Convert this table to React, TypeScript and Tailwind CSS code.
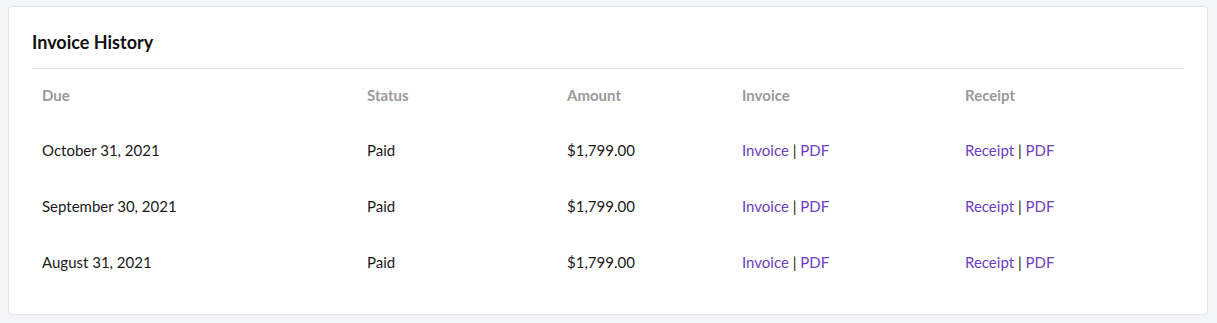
export default function App() {
  const rows = ["October 31, 2021", "September 30, 2021", "August 31, 2021"];
  const grid = "grid grid-cols-[325px_200px_175px_223px_1fr]";
  return (
    <div className="min-h-[323px] bg-[#f4f5f9] pt-[6px] pl-[8px] pr-[9px] pb-[8px] font-['Lato',sans-serif]">
      <div className="bg-white border border-[#e4e5ea] rounded-[4px] h-[309px] px-[23px]">
        <h2 className="pt-[24px] h-[61px] text-[18px] font-bold text-[#111] leading-[22px]">Invoice History</h2>
        <div className="border-t border-[#e4e5ea]">
          <div className={`${grid} h-[53px] items-center text-[15px] font-bold text-[#9a9a9a]`}>
            <div className="pl-[10px]">Due</div>
            <div className="pl-[10px]">Status</div>
            <div className="pl-[10px]">Amount</div>
            <div className="pl-[10px]">Invoice</div>
            <div className="pl-[10px]">Receipt</div>
          </div>
          {rows.map((d) => (
            <div key={d} className={`${grid} h-[56px] items-center text-[15px] text-[#1a1a1a]`}>
              <div className="pl-[10px]">{d}</div>
              <div className="pl-[10px]">Paid</div>
              <div className="pl-[10px]">$1,799.00</div>
              <div className="pl-[10px]">
                <span className="text-[#6a3dc2]">Invoice</span> | <span className="text-[#6a3dc2]">PDF</span>
              </div>
              <div className="pl-[10px]">
                <span className="text-[#6a3dc2]">Receipt</span> | <span className="text-[#6a3dc2]">PDF</span>
              </div>
            </div>
          ))}
        </div>
      </div>
    </div>
  );
}
